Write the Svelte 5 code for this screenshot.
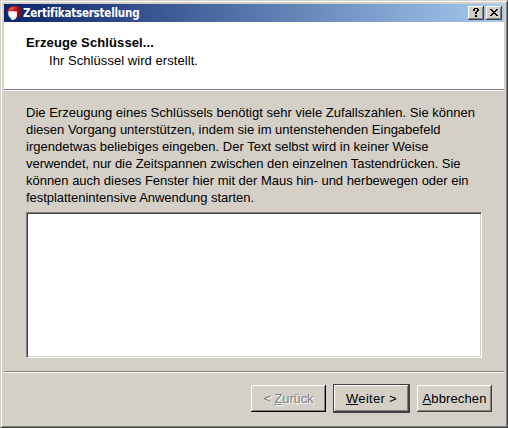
<script>
  const lines = [
    ['Die Erzeugung eines Schlüssels benötigt sehr viele Zufallszahlen. Sie können', 449],
    ['diesen Vorgang unterstützen, indem sie im untenstehenden Eingabefeld', 414.5],
    ['irgendetwas beliebiges eingeben. Der Text selbst wird in keiner Weise', 402.5],
    ['verwendet, nur die Zeitspannen zwischen den einzelnen Tastendrücken. Sie', 434.5],
    ['können auch dieses Fenster hier mit der Maus hin- und herbewegen oder ein', 442.5],
    ['festplattenintensive Anwendung starten.', 228]
  ];

  // Spreads the letters so that a line takes exactly the given width.
  function fit(node, width) {
    node.style.letterSpacing = '0px';
    const natural = node.getBoundingClientRect().width;
    node.style.letterSpacing = (width - natural) / node.textContent.length + 'px';
  }
</script>

<div class="window">
  <div class="titlebar">
    <svg class="logo" width="16" height="16" viewBox="0 0 16 16">
      <path d="M0 6Q1 2.500 4 1.500Q8 0 11 1.500Q14 3.500 14 7Q14 10.500 11 12.500H9V7L1 8Z" fill="#c4161c" />
      <path d="M10 1.500Q14 3.500 14 7Q14 10.500 11 12.500H10L11 7Z" fill="#8d101e" />
      <path d="M2 4Q4 1.500 7.500 2L7 4.500L2 6Z" fill="#e2524e" />
      <path d="M1 6.500Q5 5.500 10 6.500V11Q9 14.500 6.500 15H4.500L3 12.500L1.500 11Z" fill="#dfe4ee" />
      <path d="M2.500 7.500H9V11L7.500 14H5L4 11.500H2.500Z" fill="#fff" />
    </svg>
    <span class="title"><span use:fit={116}>Zertifikatserstellung</span></span>
    <div class="controls">
      <div class="ctl">
        <svg width="16" height="14" shape-rendering="crispEdges"><path d="M6 2h4v1h-4zM5 3h2v2h-2zM9 3h2v2h-2zM8 5h2v1h-2zM7 6h2v2h-2zM7 9h2v2h-2z" /></svg>
      </div>
      <div class="ctl">
        <svg width="16" height="14" shape-rendering="crispEdges"><path d="M4 3h2v1h-2zM10 3h2v1h-2zM5 4h2v1h-2zM9 4h2v1h-2zM6 5h4v1h-4zM7 6h2v1h-2zM6 7h4v1h-4zM5 8h2v1h-2zM9 8h2v1h-2zM4 9h2v1h-2zM10 9h2v1h-2z" /></svg>
      </div>
    </div>
  </div>

  <header>
    <div class="heading"><span use:fit={128}>Erzeuge Schlüssel...</span></div>
    <div class="sub"><span use:fit={149}>Ihr Schlüssel wird erstellt.</span></div>
  </header>

  <main>
    <div class="copy">
      {#each lines as [text, width]}
        <div class="line"><span use:fit={width}>{text}</span></div>
      {/each}
    </div>
    <div class="field"></div>
  </main>

  <footer>
    <div class="btn disabled"><span use:fit={50}>&lt; <u>Z</u>urück</span></div>
    <div class="btn default"><span use:fit={51}><u>W</u>eiter &gt;</span></div>
    <div class="btn"><span use:fit={64}><u>A</u>bbrechen</span></div>
  </footer>
</div>

<style>
  :global(body) { margin: 0; background: #d4d0c8; overflow: hidden; }
  .window {
    box-sizing: border-box;
    width: 508px;
    height: 428px;
    display: flex;
    flex-direction: column;
    background: #d4d0c8;
    border: 1px solid;
    border-color: #d4d0c8 #404040 #404040 #d4d0c8;
    box-shadow: inset 1px 1px #fff, inset -1px -1px #808080;
    padding: 3px;
    font: 13px/17px "Liberation Sans", Arial, sans-serif;
    color: #000;
  }
  span { white-space: nowrap; }
  .titlebar {
    height: 18px;
    flex: none;
    display: flex;
    align-items: center;
    background: linear-gradient(90deg, #0a246a, #a6caf0);
    padding: 0 2px;
  }
  .logo { margin: 0 0 0 1px; }
  .title {
    flex: 1;
    color: #fff;
    font: bold 11.5px/18px "DejaVu Sans Condensed", "DejaVu Sans", sans-serif;
  }
  .controls { display: flex; gap: 2px; }
  .ctl {
    box-sizing: border-box;
    width: 16px;
    height: 14px;
    background: #d4d0c8;
    box-shadow: inset -1px -1px #404040, inset 1px 1px #fff, inset -2px -2px #808080;
  }
  .ctl svg { display: block; }
  header {
    box-sizing: border-box;
    height: 68px;
    flex: none;
    padding: 12px 22px 0;
    background: #fff;
    border-bottom: 1px solid #808080;
  }
  .heading { font-weight: bold; height: 18px; }
  .sub { padding-left: 23px; }
  main {
    box-sizing: border-box;
    height: 282px;
    flex: none;
    padding: 13px 22px 0;
    border-top: 1px solid #fff;
    border-bottom: 1px solid #808080;
  }
  .copy { height: 108px; }
  .line { height: 17px; }
  .field {
    box-sizing: border-box;
    width: 456px;
    height: 146px;
    background: #fff;
    border: 1px solid;
    border-color: #808080 #fff #fff #808080;
    box-shadow: inset 1px 1px #404040, inset -1px -1px #d4d0c8;
  }
  footer {
    flex: 1;
    display: flex;
    justify-content: flex-end;
    align-items: flex-start;
    padding: 12px 12px 0 0;
    border-top: 1px solid #fff;
  }
  .btn {
    box-sizing: border-box;
    width: 75px;
    height: 27px;
    line-height: 27px;
    text-align: center;
    box-shadow: inset -1px -1px #404040, inset 1px 1px #fff, inset -2px -2px #808080;
  }
  .btn u { text-underline-offset: 1px; text-decoration-thickness: 1px; text-decoration-skip-ink: none; }
  .disabled {
    color: #808080;
    text-shadow: 1px 1px #fff;
    box-shadow: inset -1px -1px #000, inset 1px 1px #fff, inset -2px -2px #808080;
  }
  .default { margin: 0 8px; outline: 1px solid #404040; }
</style>
